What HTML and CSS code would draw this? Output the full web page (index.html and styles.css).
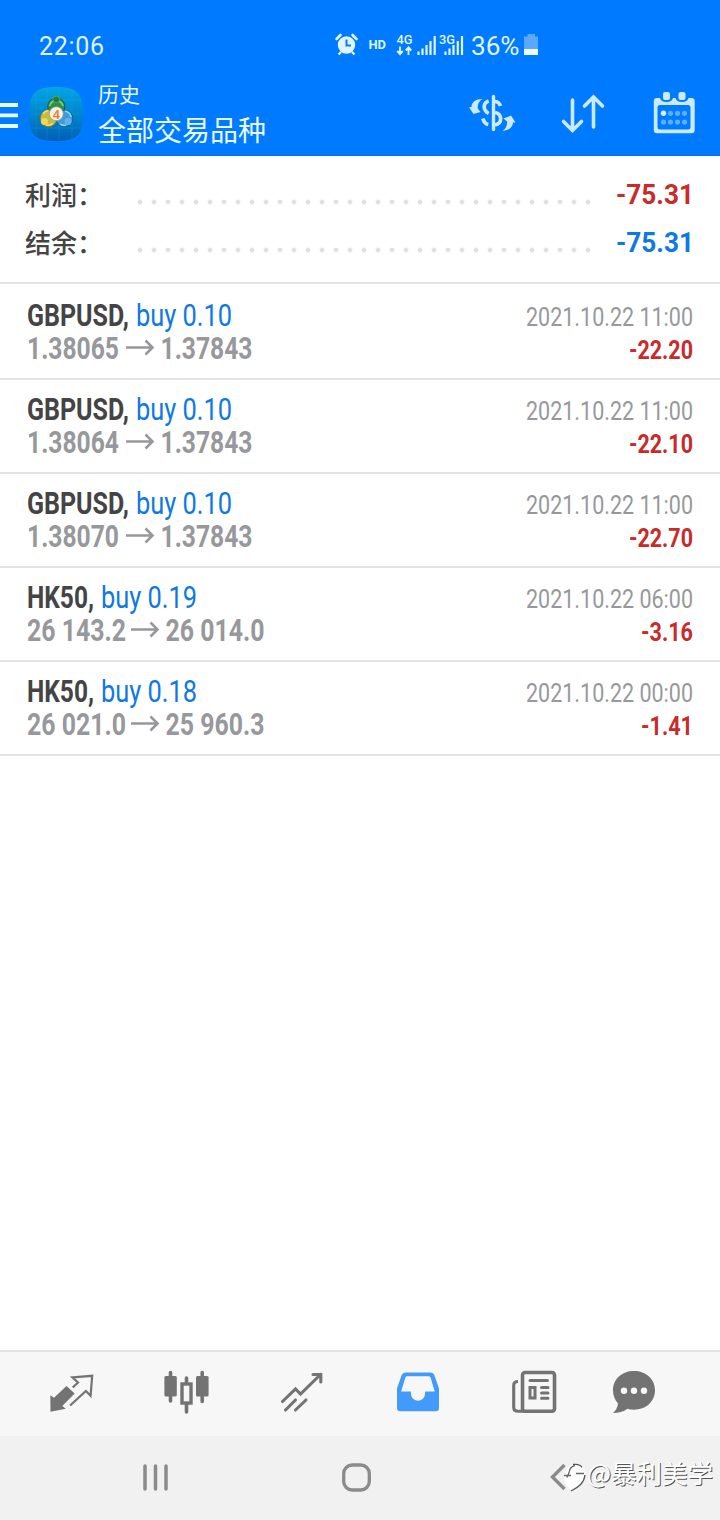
FILE: index.html
```
<!DOCTYPE html>
<html lang="zh-CN">
<head>
<meta charset="utf-8">
<title>历史</title>
<link rel="stylesheet" href="styles.css">
</head>
<body>
<div class="screen">
  <header class="header">
    <div class="status">
      <svg width="68" height="32" viewBox="38 30 68 32"><text class="stat" x="39" y="55" font-size="25" textLength="65">22:06</text></svg>
      <svg width="208" height="32" viewBox="334 30 208 32">
        <circle cx="346.500" cy="45" r="8.700" class="pale"/>
        <path d="M336.500 39l4-4M352.500 35l4 4" stroke="#dff4ff" stroke-width="2.600" stroke-linecap="round"/>
        <path d="M341 52l-2.500 2.500M352 52l2.500 2.500" stroke="#dff4ff" stroke-width="2.400"/>
        <path d="M346.500 39.500v6h4.500" fill="none" stroke="#0a7cff" stroke-width="2"/>
        <text class="stat bold" x="368.500" y="48.800" font-size="13" textLength="17.500" lengthAdjust="spacingAndGlyphs">HD</text>
        <text class="stat semi" x="396.500" y="43.500" font-size="13" textLength="16" lengthAdjust="spacingAndGlyphs">4G</text>
        <path d="M400 46.500v7M397.200 51l2.800 3 2.800-3M408.500 55v-7M405.700 50.500l2.800-3 2.800 3" fill="none" stroke="#dff4ff" stroke-width="1.900"/>
        <path d="M418.500 51.500V55M422.500 48.500V55M426.500 45V55M430.500 41V55M434.700 36V55" stroke="#dff4ff" stroke-width="2.200"/>
        <text class="stat semi" x="439" y="43.500" font-size="13" textLength="16" lengthAdjust="spacingAndGlyphs">3G</text>
        <path d="M445.500 51.500V55M449.500 48.500V55M453.500 45V55M457.800 41V55M462 36V55" stroke="#dff4ff" stroke-width="2.200"/>
        <text class="stat" x="471" y="55" font-size="25.500" textLength="48.500" lengthAdjust="spacingAndGlyphs">36%</text>
        <path d="M524 36.500h3.500v-2.500h7.500v2.500h3V49h-14z" fill="#5aa9ff"/>
        <path d="M524 49h14v6h-14z" fill="#eefaff"/>
      </svg>
    </div>
    <div class="toolbar">
      <svg class="menu" width="18" height="28" viewBox="0 102 18 28"><path d="M0 105h18M0 115.300h18M0 126h18" stroke="#e6fbff" stroke-width="3.800"/></svg>
      <svg class="logo" width="56" height="56" viewBox="28 86 56 56">
        <defs>
          <linearGradient id="tile" x1="0" y1="0" x2="0" y2="1"><stop offset="0" stop-color="#04a5e5"/><stop offset=".5" stop-color="#0086ce"/><stop offset="1" stop-color="#005fb5"/></linearGradient>
        </defs>
        <path d="M56 87C77 87 83 93 83 114S77 141 56 141 29 135 29 114 35 87 56 87z" fill="url(#tile)"/>
        <path d="M36 93v42M47 88v52M59 88v52M72 89v50M31 100h50M30 114h52M31 128h50" stroke="#32b4e8" stroke-width=".7" opacity=".3"/>
        <circle cx="56.300" cy="106.500" r="8.600" fill="#2c8f4c" stroke="#14603a" stroke-width="1"/>
        <circle cx="48.500" cy="118.500" r="8.300" fill="#c9bb3c" stroke="#7f7d2a" stroke-width="1"/>
        <circle cx="64.500" cy="118.500" r="8.300" fill="#3f9bd8" stroke="#0f5f9d" stroke-width="1"/>
        <path d="M49.500 106q2-5.500 6.800-5.500t6.800 5.500" stroke="#7cc97a" stroke-width="1.800" fill="none"/>
        <path d="M43 114q1.500-3 5.500-3.500M46 125q4 1 7-2" stroke="#ece083" stroke-width="1.600" fill="none"/>
        <path d="M65 111q5 1 6 6M60 124q3 2 6 1" stroke="#93d0f5" stroke-width="1.600" fill="none"/>
        <circle cx="56.300" cy="99.500" r="3.300" fill="#1f7a3c" stroke="#5db060" stroke-width=".8"/>
        <circle cx="44.500" cy="121.500" r="3.500" fill="#ead95a"/>
        <circle cx="68" cy="121.500" r="3.500" fill="#62b2e8"/>
        <circle cx="56.300" cy="113.700" r="7" fill="#f5f1e8" stroke="#8c9a84" stroke-width=".7"/>
        <text x="52.400" y="118.700" class="four" font-size="13.500">4</text>
      </svg>
      <div class="titles"><div class="sub">历史</div><div class="main">全部交易品种</div></div>
      <svg class="actions" width="230" height="50" viewBox="467 88 230 50">
        <path d="M493.500 96.500v33" stroke="#c9eaff" stroke-width="3.400" stroke-linecap="round"/>
        <path d="M494.500 101.500q4.500 0 6 4.500M495 112.500c7.500 1.500 7.500 11 0 12.500" fill="none" stroke="#c9eaff" stroke-width="3.700"/>
        <path d="M488.700 101c-6 2-6 9 0 12.500M482.800 118.500c1 3.500 3 5.500 5.500 6" fill="none" stroke="#c9eaff" stroke-width="3.700"/>
        <path d="M482.500 99C475.500 99 471.500 102.500 471.500 107L469 107.300 473.500 114 480.500 112 477.700 108.500C477.500 104 479 101 482.500 99z" fill="#c9eaff"/>
        <path d="M502.500 131C510 130.500 513 126 513 122.500L515.500 122.500 511 115.500 503.500 118.500 507 121.500C507.500 125 506 128.500 502.500 131z" fill="#c9eaff"/>
        <path d="M572.500 100v30M563.500 121.500l9 9 9-9M593.500 127V97M584.500 106l9-9 9 9" fill="none" stroke="#c9eaff" stroke-width="3.600" stroke-linecap="round"/>
        <path fill-rule="evenodd" d="M657 98h3q1 4 6.500 4t6.500-4h2.500q1 4 6.500 4t6.500-4h3q3.200 0 3.200 3.200v28.800q0 3.300-3.200 3.300h-34.500q-3.200 0-3.200-3.300v-28.800Q653.800 98 657 98zM660 105q-2.500 0-2.500 2.500v19.500q0 2.500 2.500 2.500h28q2.500 0 2.500-2.500v-19.500q0-2.500-2.500-2.500z" fill="#c9eaff"/>
        <rect x="663" y="92" width="7" height="8" rx="2" fill="#c9eaff"/><rect x="678.500" y="92" width="7" height="8" rx="2" fill="#c9eaff"/>
        <g fill="#59b1ff"><circle cx="663.500" cy="113.300" r="2.700" fill="#d3efff"/><circle cx="670.500" cy="113.300" r="2.600"/><circle cx="677.500" cy="113.300" r="2.600"/><circle cx="684.500" cy="113.300" r="2.600"/><circle cx="663.500" cy="122" r="2.600"/><circle cx="670.500" cy="122" r="2.600"/><circle cx="677.500" cy="122" r="2.600"/><circle cx="684.500" cy="122" r="2.600"/></g>
      </svg>
    </div>
  </header>

  <section class="summary">
    <div class="total"><span class="label">利润：</span><span class="dots"></span><svg width="84" height="34"><text class="bold red" x="5" y="26" font-size="27" textLength="78" lengthAdjust="spacingAndGlyphs">-75.31</text></svg></div>
    <div class="total"><span class="label">结余：</span><span class="dots"></span><svg width="84" height="34"><text class="bold blue" x="5" y="26" font-size="27" textLength="78" lengthAdjust="spacingAndGlyphs">-75.31</text></svg></div>
  </section>

  <main class="deals" id="deals"></main>

  <nav class="tabs">
    <svg width="48" height="48" viewBox="48 1368 48 48"><path d="M50.300 1395.200L54 1397.800 66.500 1386 74.700 1393.500 62.300 1406 65.800 1408.800 50.500 1411.700z" fill="#737373"/><path d="M72.700 1387.500l5.300-5-5.600-5.200 19.800-1.500-1.600 20-4.700-4.800-15.800 14.500" fill="none" stroke="#737373" stroke-width="2.200"/></svg>
    <svg width="48" height="48" viewBox="163 1368 48 48"><path d="M170.500 1372.500v28.500M186.500 1378v34M202.200 1372.500v29" stroke="#737373" stroke-width="3.600" stroke-linecap="round"/><rect x="164.400" y="1376" width="12.400" height="20.500" rx="1.500" fill="#737373"/><rect x="196" y="1376" width="12.600" height="20.500" rx="1.500" fill="#737373"/><rect x="182" y="1384" width="9" height="19" fill="#f7f7f7" stroke="#737373" stroke-width="3.400"/></svg>
    <svg width="48" height="48" viewBox="278 1368 48 48"><path d="M282.500 1401.500l13-12.500 5 5 20-19.500M313 1374.500h7.800v7.500M285.500 1410l10-10M295.500 1410l10.500-10" fill="none" stroke="#737373" stroke-width="3.100" stroke-linecap="round"/></svg>
    <svg width="48" height="48" viewBox="394 1368 48 48"><path fill-rule="evenodd" d="M406 1372.500h24q3.500 0 4.500 3l4.500 13V1408q0 3.200-3.200 3.200h-35.600q-3.200 0-3.200-3.200V1388.500l4.500-13q1-3 4.500-3zM406.800 1376.200q-1 0-1.600 1.800l-4 13.500h9.600q0 9.200 7.200 9.200t7.200-9.200h9.500l-4-13.500q-.6-1.800-1.600-1.800z" fill="#429bfa"/></svg>
    <svg width="48" height="48" viewBox="510 1368 48 48"><rect x="522.500" y="1372.500" width="32" height="38.800" rx="2.500" fill="none" stroke="#737373" stroke-width="3.600"/><path d="M518 1381.500q-4.300 0-4.300 4v21.500q0 4.300 4.300 4.300h6" fill="none" stroke="#737373" stroke-width="3.100"/><path d="M530 1380.500h17.500M541.500 1387.500h6.500M541.500 1393h6.500M541.500 1398.200h6.500" stroke="#737373" stroke-width="3" stroke-linecap="round"/><rect x="530" y="1387.500" width="5" height="10.500" fill="none" stroke="#737373" stroke-width="3"/></svg>
    <svg width="48" height="48" viewBox="610 1368 48 48"><path d="M634 1371c12 0 21 8 21 19.300s-9 19.400-21 19.400q-4 0-6.500-1c-4 3-9 4.200-14.500 4.200q4.500-4 5-9.500c-3-3.200-5-7.500-5-13.100C613 1379 622 1371 634 1371z" fill="#737373"/><g fill="#f7f7f7"><circle cx="624" cy="1390.700" r="3.200"/><circle cx="634" cy="1390.700" r="3.200"/><circle cx="644" cy="1390.700" r="3.200"/></g></svg>
  </nav>
  <footer class="system">
    <svg width="720" height="84" viewBox="0 1436 720 84">
      <path d="M145 1466v23M155.500 1466v23M166 1466v23" stroke="#8b8b8b" stroke-width="3.500" stroke-linecap="round"/>
      <rect x="343.700" y="1465" width="25.600" height="25" rx="8.500" fill="none" stroke="#8b8b8b" stroke-width="3.300"/>
      <path d="M564.500 1465l-12 12 12 12" fill="none" stroke="#8b8b8b" stroke-width="3.400"/>
      <path d="M568 1487c-6-8-5-18 4-22.500 7-2 13 2 13 9 0 10-7 12-14 17.500z" fill="#fff"/>
      <path d="M573 1464.500q7-1 9 3M585 1475c-1 8-6 12-14 16" fill="none" stroke="#555" stroke-width="1.300"/>
      <path d="M564 1475.500h7M576 1473.500h8M575 1465.500q-5 1-6 7l-2 5" fill="none" stroke="#666" stroke-width="1.300"/>
      <text class="mark shade" x="588" y="1483.700" font-size="25.500" textLength="126">@暴利美学</text>
      <text class="mark" x="587" y="1482.700" font-size="25.500" textLength="126">@暴利美学</text>
    </svg>
  </footer>
</div>
<script src="app.js"></script>
</body>
</html>
```
FILE: styles.css
```
body { margin: 0; background: #fff; font-family: Roboto, "Noto Sans CJK SC", sans-serif; }
svg { display: block; flex: none; }
svg text { font-family: Roboto, "Noto Sans CJK SC", sans-serif; }
.screen { width: 720px; height: 1520px; display: flex; flex-direction: column; overflow: hidden; }

.header { box-sizing: border-box; height: 156px; background: #007aff; border-bottom: 1px solid #0870d8; }
.status { display: flex; padding: 30px 0 0 38px; gap: 228px; }
.stat { fill: #dff4ff; }
.pale { fill: #dff4ff; }
.bold { font-weight: 700; }
.semi { font-weight: 500; }
.toolbar { display: flex; align-items: flex-start; padding-top: 20px; }
.menu { margin-top: 20px; }
.logo { margin: 4px 0 0 10px; }
.four { font-weight: 500; fill: #ee7c35; }
.titles { width: 369px; margin-left: 14px; color: #e6fbff; white-space: nowrap; }
.sub { height: 26px; line-height: 26px; font-size: 21px; }
.main { height: 40px; line-height: 48px; font-size: 28px; }
.actions { margin-top: 6px; }

.summary { box-sizing: border-box; height: 128px; padding: 15px 26px 0 25px; border-bottom: 2px solid #e3e3e3; }
.total { display: flex; align-items: center; height: 48px; }
.label { width: 108px; padding-top: 3px; color: #444; font-size: 26px; font-weight: 500; line-height: 45px; white-space: nowrap; }
.dots { width: 462px; height: 6px; margin-top: 14px; background: radial-gradient(circle at 7px 3px, #e0e0e0 1.700px, transparent 2.900px) 0 0 / 14px 6px; }
.total svg { margin-left: auto; margin-right: -1px; }
.red { fill: #c92a2a; }
.blue { fill: #0f79e2; }

.deals { flex: 1; }
.deal { box-sizing: border-box; height: 94px; display: flex; justify-content: space-between; border-bottom: 2px solid #e3e3e3; }
.deal:first-child { height: 96px; padding-top: 2px; }
.symbol { fill: #444; font-weight: 700; }
.gray { fill: #97989b; }

.tabs { box-sizing: border-box; height: 86px; padding: 16px 0 0 48px; display: grid; grid-template-columns: 115px 115px 116px 116px 100px 48px; border-top: 2px solid #e3e3e3; background: #f7f7f7; }
.system { height: 84px; background: #f1f1f1; }
svg .mark { fill: #fff; font-family: "Noto Sans CJK SC", sans-serif; font-weight: 400; }
svg .shade { fill: #555; }
```
FILE: app.js
```
// [symbol, width, side and volume, x, open, open width, close, close x, close width, time, profit, profit x]
const deals = [
  ['GBPUSD,', 102, 'buy 0.10', 136, '1.38065', 91, '1.37843', 161, 91, '2021.10.22 11:00', '-22.20', 629],
  ['GBPUSD,', 102, 'buy 0.10', 136, '1.38064', 91, '1.37843', 161, 91, '2021.10.22 11:00', '-22.10', 629],
  ['GBPUSD,', 102, 'buy 0.10', 136, '1.38070', 91, '1.37843', 161, 91, '2021.10.22 11:00', '-22.70', 629],
  ['HK50,', 67, 'buy 0.19', 101, '26 143.2', 98, '26 014.0', 166, 98, '2021.10.22 06:00', '-3.16', 641],
  ['HK50,', 67, 'buy 0.18', 101, '26 021.0', 98, '25 960.3', 166, 98, '2021.10.22 00:00', '-1.41', 641]
];
const text = (cls, x, y, size, width, value) =>
  `<text class="${cls}" x="${x}" y="${y}" font-size="${size}" textLength="${width}" lengthAdjust="spacingAndGlyphs">${value}</text>`;
document.getElementById('deals').innerHTML = deals.map(d => {
  const ax = d[7] - 35;
  return `<div class="deal"><svg width="300" height="92">
    ${text('symbol', 27, 40, 31, d[1], d[0])}
    ${text('blue', d[3], 40, 31, 96, d[2])}
    ${text('gray bold', 27, 73, 31, d[5] + 1, d[4])}
    <path d="M${ax} 61.500h27M${ax + 19.500} 54.500l7 7-7 7" fill="none" stroke="#97989b" stroke-width="2.600"/>
    ${text('gray bold', d[7] - .5, 73, 31, d[8] + 1, d[6])}
  </svg><svg width="200" height="92" viewBox="520 0 200 92">
    ${text('gray', 526, 40.300, 25, 167, d[9])}
    ${text('red bold', d[11], 73.300, 25, 693 - d[11], d[10])}
  </svg></div>`;
}).join('');
```
